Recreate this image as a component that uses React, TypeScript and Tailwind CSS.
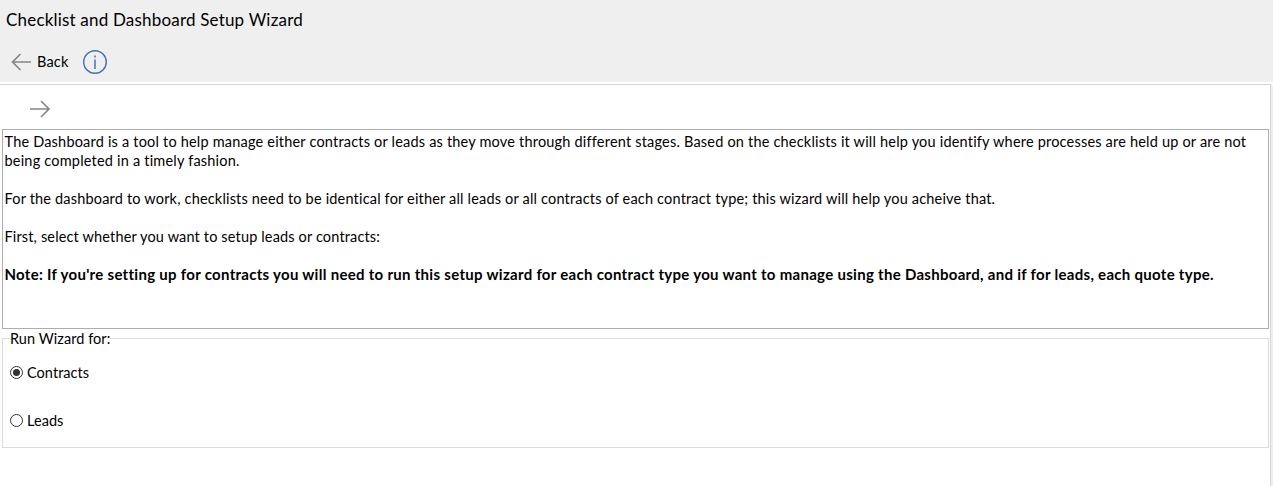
import { useState } from "react"

const OPTIONS = ["Contracts", "Leads"]

function ArrowLeft() {
  return (
    <svg width="20" height="18" viewBox="0 0 20 18" fill="none" stroke="#85888b" strokeWidth="1.7">
      <path d="M20 9H1.5M9.5 1l-8 8 8 8" />
    </svg>
  )
}

function ArrowRight() {
  return (
    <svg width="20" height="18" viewBox="0 0 20 18" fill="none" stroke="#85888b" strokeWidth="1.7">
      <path d="M0 9h19M11 1l8 8-8 8" />
    </svg>
  )
}

function InfoIcon() {
  return (
    <svg width="24" height="24" viewBox="0 0 24 24" fill="none">
      <circle cx="12" cy="12" r="11.3" stroke="#3f74ae" strokeWidth="1.4" />
      <path d="M12 9.5V19M12 5.5v2" stroke="#6b93c4" strokeWidth="2" />
    </svg>
  )
}

export default function App() {
  const [target, setTarget] = useState("Contracts")

  return (
    <div className="flex h-[486px] w-[1273px] flex-col overflow-hidden bg-white font-['Lato','Noto_Sans',sans-serif] text-[14.5px] leading-[19px] text-black">
      <header className="h-[82px] shrink-0 bg-[#efefef] pt-2">
        <h1 className="pl-[6px] text-[17px] leading-6 tracking-[0.19px]">Checklist and Dashboard Setup Wizard</h1>
        <div className="mt-[18px] flex h-6 items-center pl-[11px]">
          <button className="flex items-center gap-[6px]">
            <ArrowLeft />
            <span className="pb-px tracking-[0.2px]">Back</span>
          </button>
          <button className="ml-[14px]">
            <InfoIcon />
          </button>
        </div>
      </header>

      <div className="mt-[2px] flex flex-1">
        <main className="flex w-[1271px] flex-col border-t border-r border-[#d5d5d5] pr-[1px] pl-[2px]">
          <div className="flex h-[44px] items-center pt-[4px] pl-[28px]">
            <button>
              <ArrowRight />
            </button>
          </div>

          <section className="h-[200px] border border-[#abadb3] pt-[2px] pl-[1.5px] whitespace-pre">
            <p className="tracking-[0.196px]">
              The Dashboard is a tool to help manage either contracts or leads as they move through different stages. Based on the checklists it will help you identify where processes are held up or are not
            </p>
            <p className="tracking-[0.2px]">being completed in a timely fashion.</p>
            <p className="mt-[19px] tracking-[0.18px]">
              For the dashboard to work, checklists need to be identical for either all leads or all contracts of each contract type; this wizard will help you acheive that.
            </p>
            <p className="mt-[19px] tracking-[0.15px]">First, select whether you want to setup leads or contracts:</p>
            <p className="mt-[19px] text-[15px] leading-[19px] font-bold tracking-[0.29px]">
              Note: If you're setting up for contracts you will need to run this setup wizard for each contract type you want to manage using the Dashboard, and if for leads, each quote type.
            </p>
          </section>

          <fieldset className="mt-[1px] h-[118px] border border-[#dcdcdc]">
            <legend className="ml-[7px] h-[17px] leading-[18px] tracking-[0.06px]">Run Wizard for:</legend>
            <div className="flex flex-col gap-[29px] pt-[16px] pl-[7px]">
              {OPTIONS.map((option) => (
                <label key={option} className="flex items-center gap-1">
                  <input
                    type="radio"
                    name="target"
                    className="peer sr-only"
                    checked={target === option}
                    onChange={() => setTarget(option)}
                  />
                  <span className="flex size-[13px] items-center justify-center rounded-full border border-[#333] peer-checked:[&>i]:bg-[#333]">
                    <i className="size-[7px] rounded-full" />
                  </span>
                  <span className="tracking-[0.05px]">{option}</span>
                </label>
              ))}
            </div>
          </fieldset>
        </main>
        <div className="mt-px flex-1 bg-[#efefef]" />
      </div>
    </div>
  )
}
